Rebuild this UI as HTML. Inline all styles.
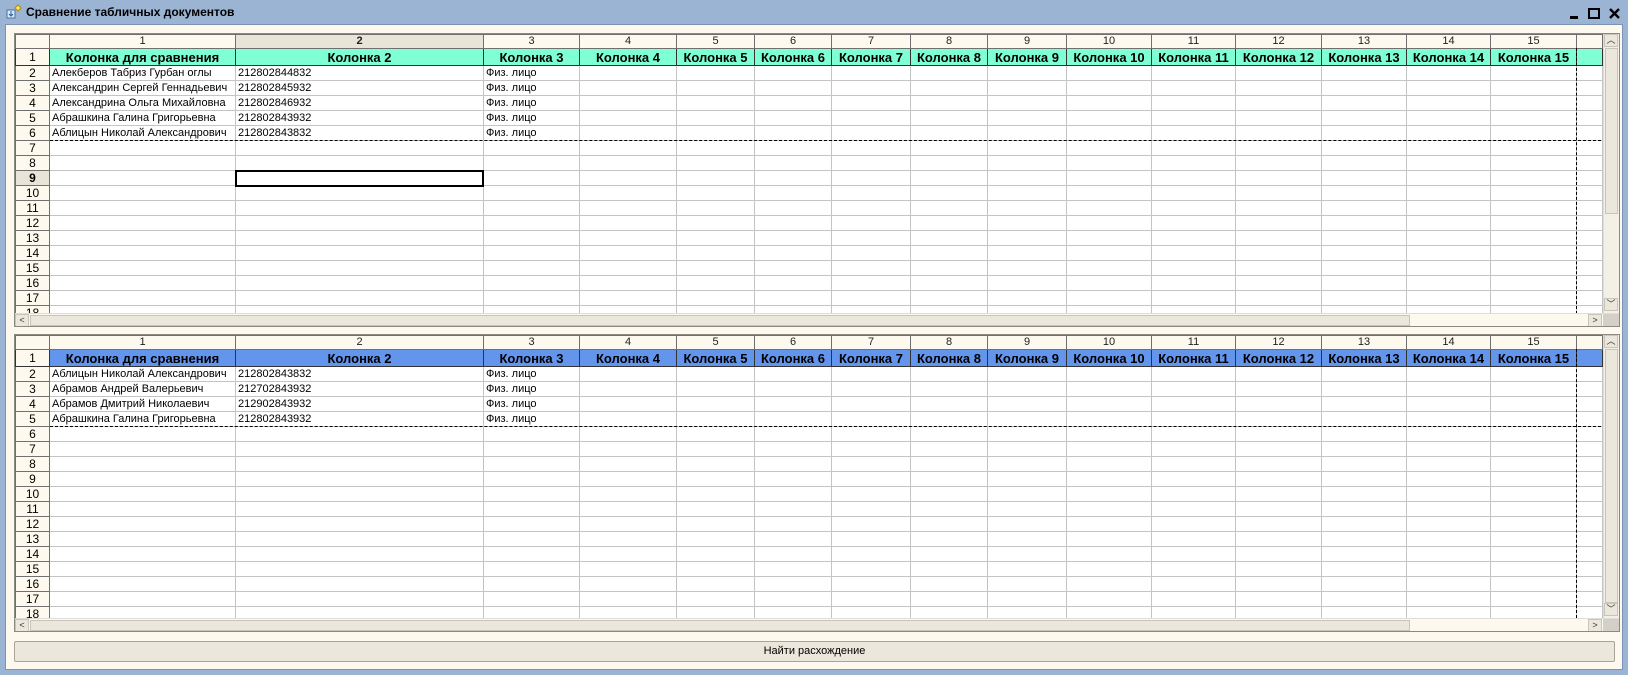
<!DOCTYPE html>
<html><head><meta charset="utf-8">
<style>
*{box-sizing:border-box;margin:0;padding:0}
body{width:1628px;height:675px;overflow:hidden;background:#9bb4d4;font-family:"Liberation Sans",sans-serif;position:relative}
.win{position:absolute;left:5px;top:24px;width:1618px;height:646px;background:#fdf9ee;border:1px solid #7d93b5}
.title{position:absolute;left:26px;top:5px;font:bold 12px "Liberation Sans",sans-serif;color:#000}
.grid{position:absolute;left:14px;width:1606px;border:1px solid #8a8a80;background:#fff;overflow:hidden}
table{border-collapse:collapse;table-layout:fixed;width:1587px;position:absolute;left:0;top:0}
td{border:1px solid #c4c4c4;height:15px;font-size:11px;white-space:nowrap;overflow:hidden;padding:0 2px;line-height:13px}
tr.h td{background:#fdf9ee;border:1px solid #707070;text-align:center;height:14px;font-size:11px;color:#222}
td.rh{background:#fdf9ee;border:1px solid #707070;text-align:center;font-size:12px}
tr.r1 td{height:17px;font-weight:bold;font-size:13px;text-align:center;border:1px solid #333}
tr.r1 td.rh{font-weight:normal;font-size:12px}
.g1 tr.r1 td{background:#7fffd4}
.g2 tr.r1 td{background:#6495ed}
tr.r1 td.rh{background:#fdf9ee}
.vs{position:absolute;right:0;top:0;width:16px;background:#f3f0e6;border-left:1px solid #ddd}
.hs{position:absolute;left:0;height:13px;background:#fdf9ee;border-top:1px solid #ddd}
.thumb{position:absolute;top:1px;height:11px;background:#ebe7dc;border:1px solid #c8c4b8}
.btn{position:absolute;width:14px;height:13px;background:#ebe7dc;border:1px solid #c8c4b8;font-size:9px;text-align:center;line-height:11px;color:#333}
.dh{position:absolute;left:35px;width:1551px;border-top:1px dashed #000}
.dv{position:absolute;left:1561px;border-left:1px dashed #000}
.sel{position:absolute;border:2px solid #000}
.fbtn{position:absolute;left:14px;top:641px;width:1601px;height:21px;background:#ebe7dc;border:1px solid #a8a498;border-radius:2px;font-size:11px;text-align:center;line-height:19px}
</style></head><body>
<svg style="position:absolute;left:6px;top:4px" width="18" height="16"><rect x="1" y="6" width="8" height="8" fill="#dfe8f6" stroke="#4a6fa0"/><path d="M5 7v5M3 10l2 2 2-2" stroke="#1a5fb4" fill="none"/><path d="M12 1l3 3-3 3-3-3z" fill="#ffe566" stroke="#b08a00"/></svg>
<div class="title">Сравнение табличных документов</div>
<div style="position:absolute;left:1570px;top:16px;width:8px;height:3px;background:#000"></div>
<div style="position:absolute;left:1588px;top:8px;width:12px;height:11px;border:2px solid #000;border-top-width:2px"></div>
<svg style="position:absolute;left:1609px;top:8px" width="11" height="11"><path d="M1 1L10 10M10 1L1 10" stroke="#000" stroke-width="2.4"/></svg>
<div class="win"></div>

<div class="grid g1" style="top:33px;height:294px">
<table id="t1"><colgroup><col style="width:34px"><col style="width:186px"><col style="width:248px"><col style="width:96px"><col style="width:97px"><col style="width:78px"><col style="width:77px"><col style="width:79px"><col style="width:77px"><col style="width:79px"><col style="width:85px"><col style="width:84px"><col style="width:86px"><col style="width:85px"><col style="width:84px"><col style="width:86px"><col style="width:26px"></colgroup>
<tr class="h"><td></td><td>1</td><td style="background:#e8e4d8;font-weight:bold">2</td><td>3</td><td>4</td><td>5</td><td>6</td><td>7</td><td>8</td><td>9</td><td>10</td><td>11</td><td>12</td><td>13</td><td>14</td><td>15</td><td></td></tr>
<tr class="r1"><td class="rh">1</td><td>Колонка для сравнения</td><td>Колонка 2</td><td>Колонка 3</td><td>Колонка 4</td><td>Колонка 5</td><td>Колонка 6</td><td>Колонка 7</td><td>Колонка 8</td><td>Колонка 9</td><td>Колонка 10</td><td>Колонка 11</td><td>Колонка 12</td><td>Колонка 13</td><td>Колонка 14</td><td>Колонка 15</td><td></td></tr>
<tr><td class="rh">2</td><td>Алекберов Табриз Гурбан оглы</td><td>212802844832</td><td>Физ. лицо</td><td></td><td></td><td></td><td></td><td></td><td></td><td></td><td></td><td></td><td></td><td></td><td></td><td></td></tr>
<tr><td class="rh">3</td><td>Александрин Сергей Геннадьевич</td><td>212802845932</td><td>Физ. лицо</td><td></td><td></td><td></td><td></td><td></td><td></td><td></td><td></td><td></td><td></td><td></td><td></td><td></td></tr>
<tr><td class="rh">4</td><td>Александрина Ольга Михайловна</td><td>212802846932</td><td>Физ. лицо</td><td></td><td></td><td></td><td></td><td></td><td></td><td></td><td></td><td></td><td></td><td></td><td></td><td></td></tr>
<tr><td class="rh">5</td><td>Абрашкина Галина Григорьевна</td><td>212802843932</td><td>Физ. лицо</td><td></td><td></td><td></td><td></td><td></td><td></td><td></td><td></td><td></td><td></td><td></td><td></td><td></td></tr>
<tr><td class="rh">6</td><td>Аблицын Николай Александрович</td><td>212802843832</td><td>Физ. лицо</td><td></td><td></td><td></td><td></td><td></td><td></td><td></td><td></td><td></td><td></td><td></td><td></td><td></td></tr>
</table>
<div class="dh" style="top:106px"></div>
<div class="dv" style="top:14px;height:266px"></div>
<div class="sel" style="left:220px;top:136px;width:249px;height:17px"></div>
<div class="vs" style="height:279px"><div class="btn" style="left:0;top:0">︿</div><div style="position:absolute;left:1px;top:14px;width:13px;height:166px;background:#ebe7dc;border:1px solid #c8c4b8"></div><div class="btn" style="left:0;top:264px">﹀</div></div>
<div class="hs" style="top:279px;width:1604px"><div class="btn" style="left:0;top:0">&lt;</div><div class="thumb" style="left:15px;width:1380px"></div><div class="btn" style="left:1573px;top:0">&gt;</div><div style="position:absolute;left:1588px;top:0;width:16px;height:13px;background:#d4d0c8"></div></div>
</div>

<div class="grid g2" style="top:334px;height:298px">
<table id="t2"><colgroup><col style="width:34px"><col style="width:186px"><col style="width:248px"><col style="width:96px"><col style="width:97px"><col style="width:78px"><col style="width:77px"><col style="width:79px"><col style="width:77px"><col style="width:79px"><col style="width:85px"><col style="width:84px"><col style="width:86px"><col style="width:85px"><col style="width:84px"><col style="width:86px"><col style="width:26px"></colgroup>
<tr class="h"><td></td><td>1</td><td>2</td><td>3</td><td>4</td><td>5</td><td>6</td><td>7</td><td>8</td><td>9</td><td>10</td><td>11</td><td>12</td><td>13</td><td>14</td><td>15</td><td></td></tr>
<tr class="r1"><td class="rh">1</td><td>Колонка для сравнения</td><td>Колонка 2</td><td>Колонка 3</td><td>Колонка 4</td><td>Колонка 5</td><td>Колонка 6</td><td>Колонка 7</td><td>Колонка 8</td><td>Колонка 9</td><td>Колонка 10</td><td>Колонка 11</td><td>Колонка 12</td><td>Колонка 13</td><td>Колонка 14</td><td>Колонка 15</td><td></td></tr>
<tr><td class="rh">2</td><td>Аблицын Николай Александрович</td><td>212802843832</td><td>Физ. лицо</td><td></td><td></td><td></td><td></td><td></td><td></td><td></td><td></td><td></td><td></td><td></td><td></td><td></td></tr>
<tr><td class="rh">3</td><td>Абрамов Андрей Валерьевич</td><td>212702843932</td><td>Физ. лицо</td><td></td><td></td><td></td><td></td><td></td><td></td><td></td><td></td><td></td><td></td><td></td><td></td><td></td></tr>
<tr><td class="rh">4</td><td>Абрамов Дмитрий Николаевич</td><td>212902843932</td><td>Физ. лицо</td><td></td><td></td><td></td><td></td><td></td><td></td><td></td><td></td><td></td><td></td><td></td><td></td><td></td></tr>
<tr><td class="rh">5</td><td>Абрашкина Галина Григорьевна</td><td>212802843932</td><td>Физ. лицо</td><td></td><td></td><td></td><td></td><td></td><td></td><td></td><td></td><td></td><td></td><td></td><td></td><td></td></tr>
</table>
<div class="dh" style="top:91px"></div>
<div class="dv" style="top:14px;height:269px"></div>
<div class="vs" style="height:283px"><div class="btn" style="left:0;top:0">︿</div><div style="position:absolute;left:1px;top:14px;width:13px;height:254px;background:#ebe7dc;border:1px solid #c8c4b8"></div><div class="btn" style="left:0;top:268px">﹀</div></div>
<div class="hs" style="top:283px;width:1604px"><div class="btn" style="left:0;top:0">&lt;</div><div class="thumb" style="left:15px;width:1380px"></div><div class="btn" style="left:1573px;top:0">&gt;</div><div style="position:absolute;left:1588px;top:0;width:16px;height:13px;background:#d4d0c8"></div></div>
</div>

<div class="fbtn">Найти расхождение</div>
<script>
function fill(id,from,to,selRow){var t=document.getElementById(id);for(var r=from;r<=to;r++){var tr=document.createElement('tr');var h='<td class="rh"'+(r===selRow?' style="font-weight:bold;background:#e8e4d8"':'')+'>'+r+'</td>';for(var c=0;c<16;c++)h+='<td></td>';tr.innerHTML=h;t.appendChild(tr);}}
fill('t1',7,18,9);fill('t2',6,18,0);
</script>
</body></html>
